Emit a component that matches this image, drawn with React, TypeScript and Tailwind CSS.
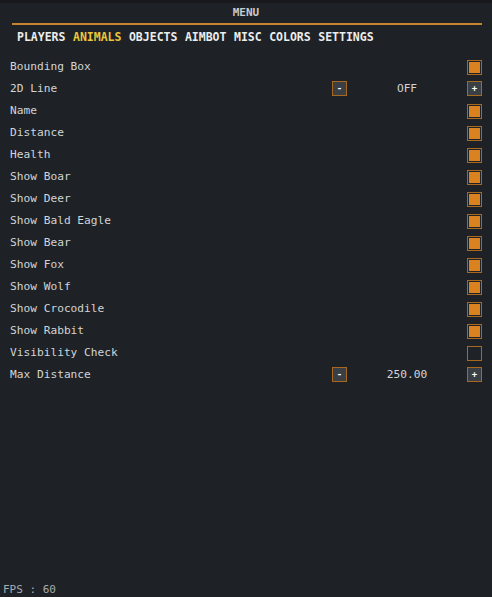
const tabs = ["PLAYERS", "ANIMALS", "OBJECTS", "AIMBOT", "MISC", "COLORS", "SETTINGS"];

type Row =
  | { label: string; kind: "check"; on: boolean }
  | { label: string; kind: "stepper"; value: string };

const rows: Row[] = [
  { label: "Bounding Box", kind: "check", on: true },
  { label: "2D Line", kind: "stepper", value: "OFF" },
  { label: "Name", kind: "check", on: true },
  { label: "Distance", kind: "check", on: true },
  { label: "Health", kind: "check", on: true },
  { label: "Show Boar", kind: "check", on: true },
  { label: "Show Deer", kind: "check", on: true },
  { label: "Show Bald Eagle", kind: "check", on: true },
  { label: "Show Bear", kind: "check", on: true },
  { label: "Show Fox", kind: "check", on: true },
  { label: "Show Wolf", kind: "check", on: true },
  { label: "Show Crocodile", kind: "check", on: true },
  { label: "Show Rabbit", kind: "check", on: true },
  { label: "Visibility Check", kind: "check", on: false },
  { label: "Max Distance", kind: "stepper", value: "250.00" },
];

function Checkbox({ on }: { on: boolean }) {
  return (
    <div className="w-[15px] h-[15px] border border-[#a8691f] p-px bg-[#1f2327]">
      {on && <div className="w-full h-full bg-[#d9821f]" />}
    </div>
  );
}

function StepButton({ sign }: { sign: string }) {
  return (
    <div className="w-[15px] h-[15px] border border-[#a8691f] bg-[#3a3f45] flex items-center justify-center text-[9px] leading-none text-white font-bold">
      {sign}
    </div>
  );
}

export default function App() {
  return (
    <div
      className="w-[492px] h-[597px] bg-[#1e2226] text-[#d6d8da] flex flex-col relative"
      style={{ fontFamily: '"DejaVu Sans Mono", "Liberation Mono", monospace' }}
    >
      <div className="h-[3px] bg-[#17191c]" />
      <div className="h-[20px] flex items-center justify-center pt-px text-[11px] font-bold text-[#c9cbcd]">
        MENU
      </div>
      <div className="ml-[12px] mr-[10px] h-[2px] bg-[#c68430]" />
      <div className="flex gap-[7.5px] pl-[17px] pt-[4px] h-[22px] items-center text-[11.5px] font-bold">
        {tabs.map((t) => (
          <span key={t} className={t === "ANIMALS" ? "text-[#e8c83a]" : "text-[#eceded]"}>
            {t}
          </span>
        ))}
      </div>
      <div className="flex flex-col pt-[9px] pl-[10px] pr-[10px]">
        {rows.map((r) => (
          <div key={r.label} className="h-[22px] flex items-center text-[11.2px] text-[#d2d4d6]">
            <span className="flex-1">{r.label}</span>
            {r.kind === "check" ? (
              <Checkbox on={r.on} />
            ) : (
              <div className="flex items-center">
                <StepButton sign="-" />
                <span className="w-[120px] text-center">{r.value}</span>
                <StepButton sign="+" />
              </div>
            )}
          </div>
        ))}
      </div>
      <div className="mt-auto pl-[3px] leading-[14px] text-[11px] text-[#a9acaf]">FPS : 60</div>
    </div>
  );
}
